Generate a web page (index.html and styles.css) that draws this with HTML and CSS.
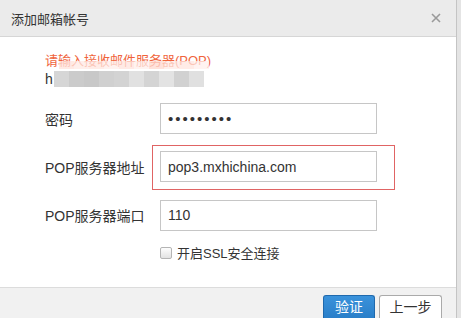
FILE: index.html
```html
<!DOCTYPE html>
<html lang="zh-CN">
  <head>
    <meta charset="UTF-8" />
    <meta name="viewport" content="width=device-width, initial-scale=1.0" />
    <title>添加邮箱帐号</title>
    <link rel="stylesheet" href="styles.css">
  </head>
  <body>
    <div class="dialog">
      <div class="dialog-header">
        <span class="dialog-title">添加邮箱帐号</span>
        <span class="dialog-close">
          <svg width="10" height="10" viewBox="0 0 10 10">
            <path d="M1 1 L9 9 M9 1 L1 9" stroke="#9a9a9a" stroke-width="1.6" fill="none" />
          </svg>
        </span>
      </div>
      <div class="dialog-body">
        <div class="hint">
          <div class="hint-text">请输入接收邮件服务器(POP)</div>
          <div class="hint-account">
            <span class="account-first">h</span>
            <span class="mosaic">
              <i style="background:#d6d6d6"></i>
              <i style="background:#cbcbcb"></i>
              <i style="background:#c8c8c8"></i>
              <i style="background:#d0d0d0"></i>
              <i style="background:#d3d3d3"></i>
              <i style="background:#e1e1e1"></i>
              <i style="background:#d4d4d4"></i>
              <i style="background:#e3e3e3"></i>
              <i style="background:#d1d1d1"></i>
              <i style="background:#e0e0e0"></i>
            </span>
            <span class="mosaic mosaic-top">
              <i style="background:#ffe3dc"></i>
              <i style="background:#ffeae5"></i>
              <i style="background:#ffe6e0"></i>
              <i style="background:#ffeeea"></i>
              <i style="background:#ffe4dd"></i>
              <i style="background:#ffefeb"></i>
              <i style="background:#ffd9d0"></i>
              <i style="background:#ffebe6"></i>
              <i style="background:#ffe6e0"></i>
              <i style="background:#fff0ed"></i>
            </span>
          </div>
        </div>

        <div class="form-grid">
          <label class="form-label" for="pwd">密码</label>
          <input class="form-input pwd-input" id="pwd" type="password" value="123456789" />

          <label class="form-label" for="host">POP服务器地址</label>
          <div class="marked">
            <input class="form-input" id="host" type="text" value="pop3.mxhichina.com" />
            <span class="mark-box"></span>
          </div>

          <label class="form-label" for="port">POP服务器端口</label>
          <input class="form-input" id="port" type="text" value="110" />

          <span></span>
          <label class="ssl-option">
            <input class="ssl-check" type="checkbox" />
            <span>开启SSL安全连接</span>
          </label>
        </div>
      </div>
      <div class="dialog-footer">
        <button class="btn btn-primary">验证</button>
        <button class="btn">上一步</button>
      </div>
    </div>
  </body>
</html>
```

FILE: styles.css
```css
body {
  margin: 0;
  background: #e4e4e4;
  font-family: "Liberation Sans", "Noto Sans CJK SC", sans-serif;
  color: #333;
  overflow: hidden;
}
.dialog {
  width: 456px;
  height: 100vh;
  background: #fff;
  border-right: 1px solid #c4c4c4;
  display: flex;
  flex-direction: column;
}
.dialog-header {
  height: 36px;
  flex: none;
  background: #ebebeb;
  border-bottom: 1px solid #d6d6d6;
  display: flex;
  align-items: center;
  justify-content: space-between;
  padding: 0 15px 0 11px;
}
.dialog-title {
  font-size: 13px;
  color: #333;
}
.dialog-close {
  display: flex;
  margin-top: -1px;
}
.dialog-body {
  height: 250px;
  flex: none;
  padding: 15px 0 0 45px;
  box-sizing: border-box;
}
.hint {
  position: relative;
}
.hint-text {
  font-size: 13px;
  line-height: 17px;
  color: #f0643c;
}
.hint-account {
  position: relative;
  display: flex;
  align-items: center;
  height: 19px;
  font-size: 14px;
}
.account-first {
  width: 9px;
}
.mosaic {
  display: flex;
}
.mosaic i {
  display: block;
  width: 15px;
  height: 16px;
}
.mosaic-top {
  position: absolute;
  left: 14px;
  top: -8px;
  opacity: 0.75;
}
.mosaic-top i {
  height: 8px;
}
.form-grid {
  display: grid;
  grid-template-columns: 115px 217px;
  grid-template-rows: 31px 31px 31px auto;
  row-gap: 17px;
  margin-top: 15px;
  align-items: center;
}
.form-grid > :nth-child(5),
.form-grid > :nth-child(6) {
  margin-top: 1px;
}
.form-label {
  font-size: 14px;
  color: #333;
}
.form-input {
  width: 217px;
  height: 31px;
  box-sizing: border-box;
  border: 1px solid #c6c6c6;
  padding: 0 7px;
  font-family: "Liberation Sans", "Noto Sans CJK SC", sans-serif;
  font-size: 14px;
  color: #333;
  outline: none;
}
.pwd-input {
  letter-spacing: 2px;
  font-size: 15px;
}
.marked {
  position: relative;
  height: 31px;
}
.mark-box {
  position: absolute;
  left: -8px;
  top: -6px;
  right: -18px;
  bottom: -8px;
  border: 1px solid #e06464;
}
.ssl-option {
  display: flex;
  align-items: center;
  gap: 5px;
  font-size: 13px;
  color: #333;
  margin-top: -4px;
}
.ssl-check {
  appearance: none;
  margin: 0;
  width: 12px;
  height: 12px;
  border: 1px solid #b4b4b4;
  border-radius: 2px;
  background: linear-gradient(#fdfdfd, #e2e2e2);
}
.dialog-footer {
  border-top: 1px solid #dcdcdc;
  background: #f1f1f1;
  flex: 1;
  display: flex;
  justify-content: flex-end;
  align-items: flex-start;
  gap: 4px;
  padding: 7px 14px 0 0;
}
.btn {
  height: 23px;
  width: 63px;
  padding: 0;
  white-space: nowrap;
  font-family: "Liberation Sans", "Noto Sans CJK SC", sans-serif;
  font-size: 14px;
  line-height: 21px;
  color: #333;
  background: #fff;
  border: 1px solid #aaa;
  border-bottom: none;
  border-radius: 3px 3px 0 0;
}
.btn-primary {
  width: 52px;
  color: #fff;
  background: linear-gradient(#3a92db, #2a7fc9);
  border-color: #1f69ad;
}
```
